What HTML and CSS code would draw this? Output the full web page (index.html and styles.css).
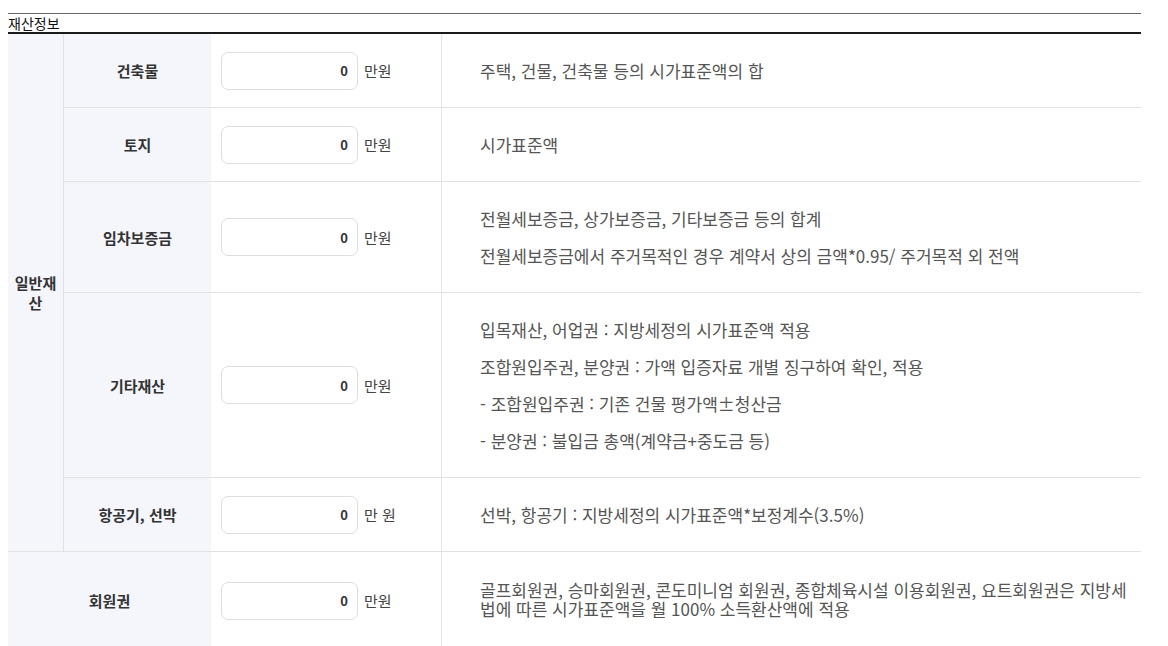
FILE: index.html
```html
<!DOCTYPE html>
<html lang="ko">
<head>
    <meta charset="UTF-8">
    <meta name="viewport" content="width=device-width, initial-scale=1.0">
    <title>재산정보</title>
    <link rel="stylesheet" href="styles.css">
</head>
<body>
<div class="section">
    <h2 class="section-title">재산정보</h2>
    <table class="asset-table">
        <tr>
            <th class="group" rowspan="5">일반재산</th>
            <th class="label">건축물</th>
            <td class="amount"><input type="text" value="0"><span class="unit">만원</span></td>
            <td class="desc"><p>주택, 건물, 건축물 등의 시가표준액의 합</p></td>
        </tr>
        <tr>
            <th class="label">토지</th>
            <td class="amount"><input type="text" value="0"><span class="unit">만원</span></td>
            <td class="desc"><p>시가표준액</p></td>
        </tr>
        <tr>
            <th class="label">임차보증금</th>
            <td class="amount"><input type="text" value="0"><span class="unit">만원</span></td>
            <td class="desc">
                <p>전월세보증금, 상가보증금, 기타보증금 등의 합계</p>
                <p>전월세보증금에서 주거목적인 경우 계약서 상의 금액*0.95/ 주거목적 외 전액</p>
            </td>
        </tr>
        <tr>
            <th class="label">기타재산</th>
            <td class="amount"><input type="text" value="0"><span class="unit">만원</span></td>
            <td class="desc">
                <p>입목재산, 어업권 : 지방세정의 시가표준액 적용</p>
                <p>조합원입주권, 분양권 : 가액 입증자료 개별 징구하여 확인, 적용</p>
                <p>- 조합원입주권 : 기존 건물 평가액±청산금</p>
                <p>- 분양권 : 불입금 총액(계약금+중도금 등)</p>
            </td>
        </tr>
        <tr>
            <th class="label">항공기, 선박</th>
            <td class="amount"><input type="text" value="0"><span class="unit">만 원</span></td>
            <td class="desc"><p>선박, 항공기 : 지방세정의 시가표준액*보정계수(3.5%)</p></td>
        </tr>
        <tr class="last-row">
            <th class="label" colspan="2">회원권</th>
            <td class="amount"><input type="text" value="0"><span class="unit">만원</span></td>
            <td class="desc"><p>골프회원권, 승마회원권, 콘도미니엄 회원권, 종합체육시설 이용회원권, 요트회원권은 지방세법에 따른 시가표준액을 월 100% 소득환산액에 적용</p></td>
        </tr>
    </table>
</div>
</body>
</html>
```

FILE: styles.css
```css
body, html {
    margin: 0;
    padding: 0;
    background: #fff;
}

body {
    padding: 13px 27px 0 8px;
    font-family: "Noto Sans CJK KR", "Noto Sans", sans-serif;
    color: #333;
}

.section {
    border-top: 1px solid #666;
}

.section-title {
    margin: 0;
    font-size: 14px;
    font-weight: normal;
    line-height: 18px;
    color: #111;
    border-bottom: 2px solid #1a1a1a;
}

.asset-table {
    width: 100%;
    border-collapse: collapse;
    table-layout: fixed;
}

.asset-table th,
.asset-table td {
    padding: 0;
    border-bottom: 1px solid #e2e2e2;
}

.asset-table th {
    background: #f4f6fb;
    font-size: 15px;
    font-weight: bold;
    color: #333;
    text-align: center;
}

.group {
    width: 55px;
    line-height: 20px;
    border-right: 1px solid #e2e2e2;
}

.label {
    width: 147px;
}

.amount {
    width: 220px;
    padding-left: 10px !important;
    border-right: 1px solid #e6e6e6;
    white-space: nowrap;
}

.amount input {
    width: 137px;
    height: 38px;
    box-sizing: border-box;
    border: 1px solid #dedede;
    border-radius: 7px;
    padding: 0 9px;
    text-align: right;
    font-family: "Noto Sans CJK KR", "Noto Sans", sans-serif;
    font-size: 13px;
    font-weight: bold;
    color: #333;
    vertical-align: middle;
}

.unit {
    margin-left: 6px;
    font-size: 15px;
    color: #444;
    vertical-align: middle;
}

.desc {
    padding: 27px 6px 27px 38px !important;
    font-size: 17px;
    line-height: 19px;
    color: #555;
}

.desc p {
    margin: 0 0 18px;
}

.desc p:last-child {
    margin-bottom: 0;
}

.last-row .desc {
    padding-top: 28px !important;
    padding-bottom: 31px !important;
}
```
